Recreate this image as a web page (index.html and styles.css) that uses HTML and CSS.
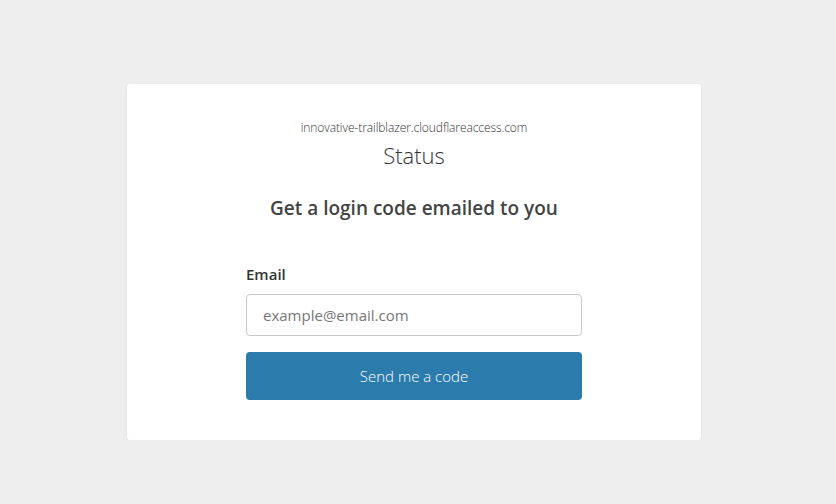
FILE: index.html
```html
<!DOCTYPE html>
<html lang="en">
<head>
<meta charset="utf-8">
<title>Status</title>
<link rel="stylesheet" href="styles.css">
</head>
<body>
<main class="page">
  <section class="card">
    <div class="domain">innovative-trailblazer.cloudflareaccess.com</div>
    <h1 class="app">Status</h1>
    <h2 class="heading">Get a login code emailed to you</h2>
    <form class="form">
      <label class="label" for="email">Email</label>
      <input class="input" id="email" type="email" placeholder="example@email.com">
      <button class="btn" type="button">Send me a code</button>
    </form>
  </section>
</main>
</body>
</html>
```
FILE: styles.css
```css
html, body {
  margin: 0;
  padding: 0;
  background: #eeeeee;
  font-family: "Open Sans", "Noto Sans", sans-serif;
}
.page {
  display: flex;
  justify-content: center;
  padding-top: 84px;
  padding-right: 8px;
}
.card {
  width: 574px;
  height: 356px;
  box-sizing: border-box;
  background: #fff;
  border-radius: 3px;
  box-shadow: 0 1px 3px rgba(0,0,0,0.08);
  display: flex;
  flex-direction: column;
  align-items: center;
  padding-top: 36px;
}
.domain {
  font-size: 12px;
  font-weight: 300;
  color: #333;
  line-height: 16px;
  letter-spacing: -0.08px;
}
.app {
  margin: 4px 0 0;
  font-size: 22px;
  font-weight: 300;
  color: #333;
  line-height: 30px;
}
.heading {
  margin: 25px 0 0;
  font-size: 19px;
  font-weight: 600;
  color: #444;
  line-height: 26px;
}
.form {
  width: 336px;
  margin-top: 43px;
  display: flex;
  flex-direction: column;
}
.label {
  font-size: 15px;
  font-weight: 600;
  color: #333;
  line-height: 20px;
}
.input {
  margin-top: 10px;
  height: 42px;
  box-sizing: border-box;
  border: 1px solid #c8c8c8;
  border-radius: 4px;
  padding: 0 16px;
  font-family: inherit;
  font-size: 15px;
  color: #333;
}
.input::placeholder {
  color: #777;
}
.btn {
  margin-top: 16px;
  height: 48px;
  border: 0;
  border-radius: 4px;
  background: #2c7bad;
  color: #fff;
  font-family: inherit;
  font-size: 15px;
  font-weight: 300;
}
```
